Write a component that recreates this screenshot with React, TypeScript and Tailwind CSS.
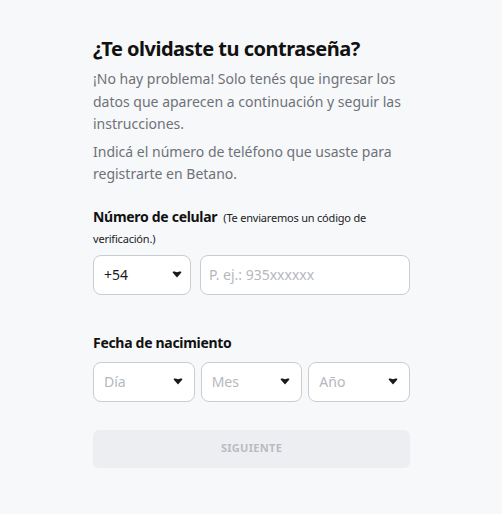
import React from 'react';

const Caret = () => (
  <svg width="10" height="7" viewBox="0 0 10 7" className="shrink-0">
    <path d="M0.6 1.6 C0.6 0.4 1.6 0.2 2.4 0.5 L5 1.3 L7.6 0.5 C8.4 0.2 9.4 0.4 9.4 1.6 L5 6.6 Z" fill="#1a1a1a" />
  </svg>
);

const Select = ({ label, dark, className }: { label: string; dark?: boolean; className: string }) => (
  <div
    className={`h-[40px] rounded-[8px] border border-[#c9ccd1] bg-white flex items-center justify-between pl-[10px] ${className}`}
  >
    <span className={`text-[14px] ${dark ? 'text-[#1a1a1a]' : 'text-[#b4b8be]'}`}>{label}</span>
    <Caret />
  </div>
);

const App = () => {
  return (
    <div className="min-h-[514px] w-full bg-[#f7f8fa] font-['Noto_Sans',sans-serif]">
      <div className="w-[317px] ml-[93px] pt-[35px]">
        <h1 className="text-[20px] font-bold text-[#111] leading-[28px] tracking-[-0.5px]">
          ¿Te olvidaste tu contraseña?
        </h1>
        <p className="mt-[5px] text-[14px] leading-[22.5px] text-[#6e7278]">
          ¡No hay problema! Solo tenés que ingresar los datos que aparecen a continuación y seguir las instrucciones.
        </p>
        <p className="mt-[5px] text-[14px] leading-[22.5px] text-[#6e7278]">
          Indicá el número de teléfono que usaste para registrarte en Betano.
        </p>

        <p className="mt-[20px] text-[14px] leading-[21px]">
          <span className="font-bold text-[#111] tracking-[-0.3px]">Número de celular</span>
          <span className="text-[11px] leading-[14px] text-[#222] ml-[6px] tracking-[-0.2px]">
            (Te enviaremos un código de verificación.)
          </span>
        </p>
        <div className="mt-[7px] flex gap-[9px]">
          <Select label="+54" dark className="w-[98px] pr-[8px]" />
          <div className="flex-1 h-[40px] rounded-[8px] border border-[#c9ccd1] bg-white flex items-center pl-[8px] pr-[10px]">
            <span className="text-[14px] text-[#b4b8be]">P. ej.: 935xxxxxx</span>
          </div>
        </div>

        <div className="mt-[37px] text-[14px] font-bold text-[#111] leading-[22px] tracking-[-0.3px]">
          Fecha de nacimiento
        </div>
        <div className="mt-[8px] flex gap-[6px]">
          <Select label="Día" className="flex-1 pr-[11px]" />
          <Select label="Mes" className="flex-1 pr-[11px]" />
          <Select label="Año" className="flex-1 pr-[11px]" />
        </div>

        <div className="mt-[28px] h-[38px] rounded-[6px] bg-[#eceef1] flex items-center justify-center">
          <span className="text-[11px] font-bold text-[#b8bcc2] tracking-[0.3px]">SIGUIENTE</span>
        </div>
      </div>
    </div>
  );
};

export default App;
